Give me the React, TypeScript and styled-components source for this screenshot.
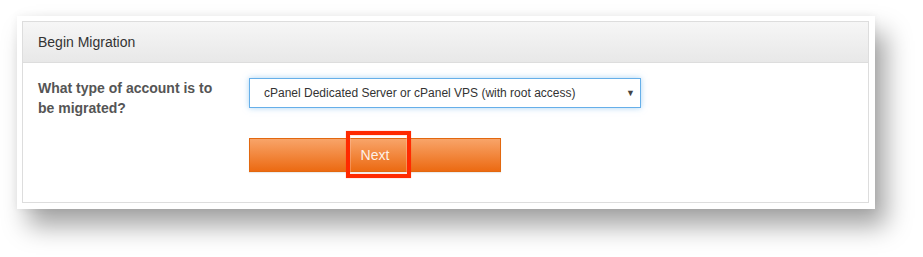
import React from "react";
import styled, { createGlobalStyle } from "styled-components";

const GlobalStyle = createGlobalStyle`
  html, body {
    margin: 0;
    padding: 0;
    background: #ffffff;
  }
  body {
    font-family: "Liberation Sans", Arial, sans-serif;
    width: 923px;
    height: 257px;
    overflow: hidden;
  }
`;

const Frame = styled.div`
  margin: 16px 0 0 17px;
  width: 858px;
  height: 193px;
  box-sizing: border-box;
  padding: 5px 6px 6px 5px;
  background: #ffffff;
  box-shadow: 11px 17px 24px rgba(0, 0, 0, 0.36), 0 0 8px rgba(0, 0, 0, 0.06);
`;

const Panel = styled.section`
  height: 182px;
  box-sizing: border-box;
  border: 1px solid #dddddd;
  display: flex;
  flex-direction: column;
`;

const PanelHeader = styled.header`
  height: 40px;
  border-bottom: 1px solid #dddddd;
  background: linear-gradient(#f6f6f6, #e8e8e8);
  display: flex;
  align-items: center;
  padding-left: 15px;
  font-size: 14px;
  color: #333333;
`;

const PanelBody = styled.div`
  flex: 1;
  padding: 15px 15px 0 15px;
  display: grid;
  grid-template-columns: 180px 392px;
  column-gap: 31px;
  row-gap: 20px;
  align-content: start;
`;

const Label = styled.label`
  font-size: 14px;
  font-weight: bold;
  line-height: 20px;
  color: #555555;
`;

const SelectBox = styled.div`
  height: 30px;
  box-sizing: border-box;
  border: 1px solid #66afe9;
  box-shadow: 0 0 6px rgba(102, 175, 233, 0.55);
  display: flex;
  align-items: center;
  justify-content: space-between;
  padding: 0 5px 0 14px;
  font-size: 12px;
  color: #333333;
  background: #ffffff;
`;

const Caret = styled.span`
  font-size: 9px;
  color: #444444;
  line-height: 1;
`;

const Spacer = styled.div``;

const ButtonWrap = styled.div`
  position: relative;
  width: 252px;
`;

const NextButton = styled.button`
  width: 252px;
  height: 34px;
  box-sizing: border-box;
  border: 1px solid #e2680f;
  background: linear-gradient(#f8a469, #ec6a12);
  color: #fdf1e8;
  font-family: "Liberation Sans", Arial, sans-serif;
  font-size: 14px;
  padding: 0;
  cursor: pointer;
  box-shadow: 0 1px 1px rgba(0, 0, 0, 0.08);
`;

const Highlight = styled.div`
  position: absolute;
  left: 97px;
  top: -7px;
  width: 65px;
  height: 47px;
  box-sizing: border-box;
  border: 4px solid #ff2a00;
  box-shadow: 0 0 1px rgba(255, 60, 30, 0.5),
    inset 0 0 0 1px rgba(255, 200, 180, 0.35);
  pointer-events: none;
`;

export default function App() {
  return (
    <>
      <GlobalStyle />
      <Frame>
        <Panel>
          <PanelHeader>Begin Migration</PanelHeader>
          <PanelBody>
            <Label>What type of account is to be migrated?</Label>
            <SelectBox>
              <span>cPanel Dedicated Server or cPanel VPS (with root access)</span>
              <Caret>▼</Caret>
            </SelectBox>
            <Spacer />
            <ButtonWrap>
              <NextButton>Next</NextButton>
              <Highlight />
            </ButtonWrap>
          </PanelBody>
        </Panel>
      </Frame>
    </>
  );
}
